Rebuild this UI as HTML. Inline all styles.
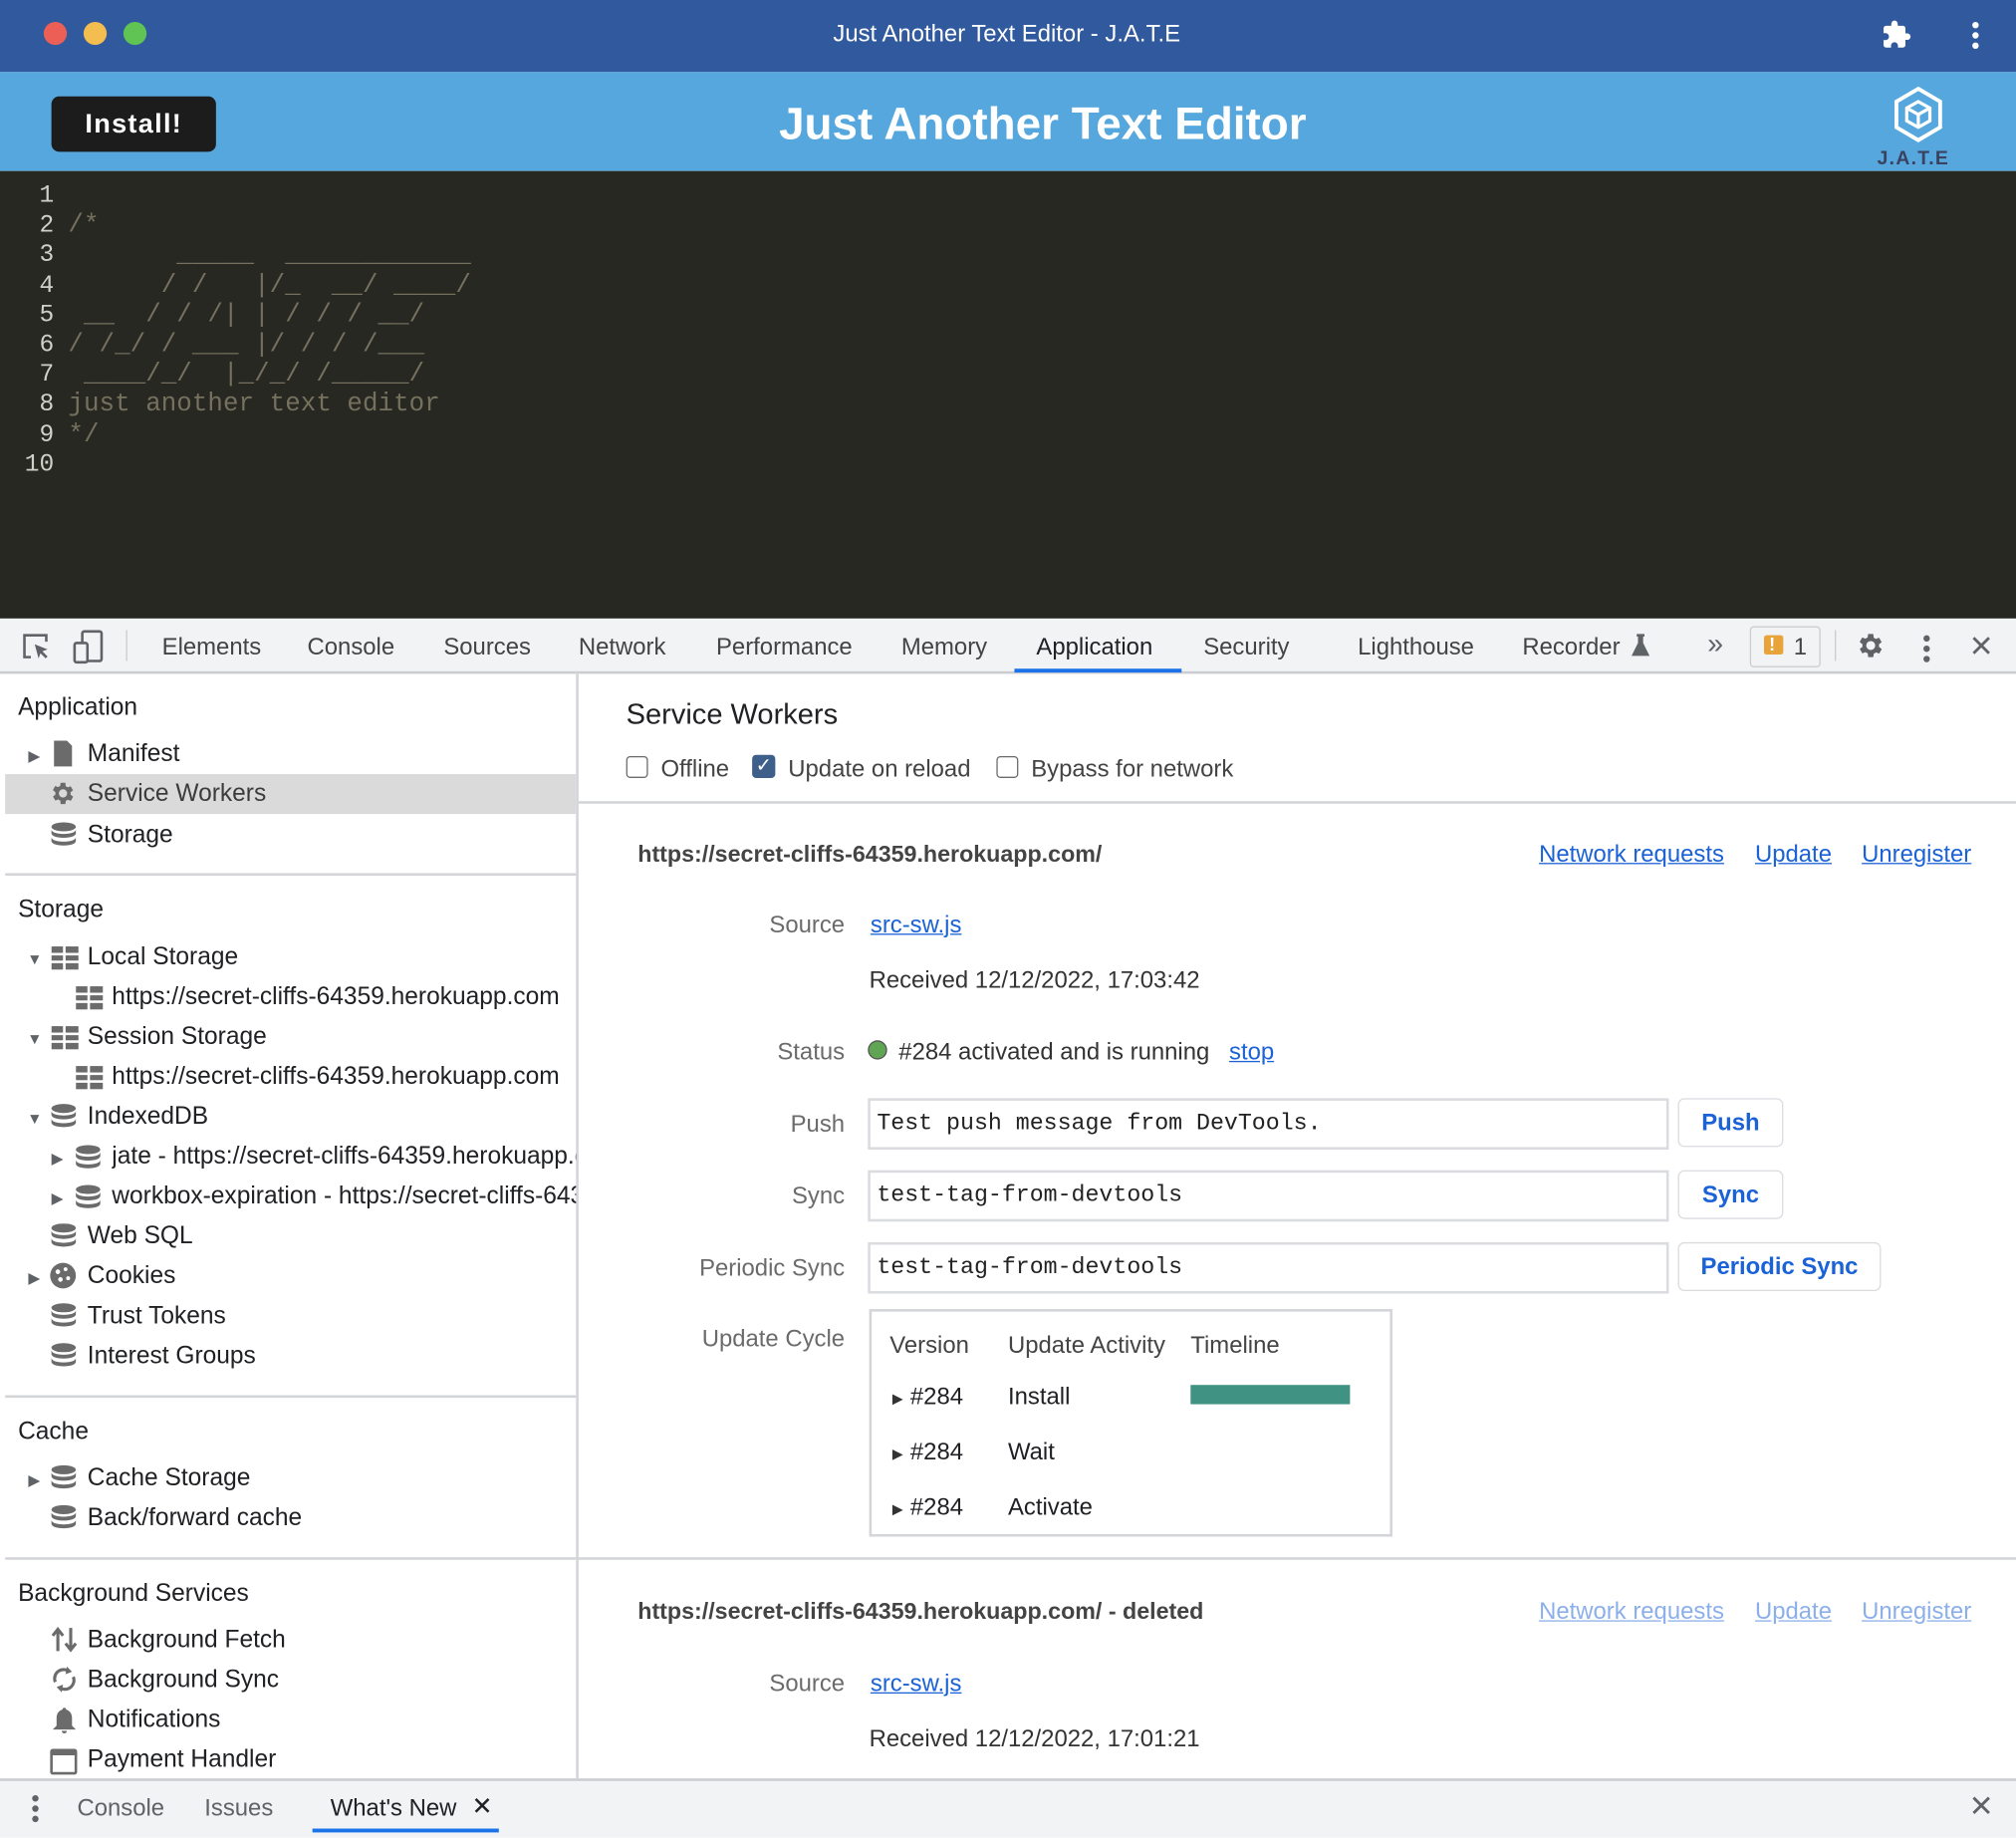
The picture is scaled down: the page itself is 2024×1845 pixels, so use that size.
<!DOCTYPE html>
<html><head><meta charset="utf-8">
<style>
html,body{margin:0;padding:0;width:2024px;height:1844px;overflow:hidden;background:#fff;}
#w{position:absolute;left:0;top:0;width:1568px;height:1429px;transform:scale(1.29082);transform-origin:0 0;font-family:"Liberation Sans",Arial,sans-serif;overflow:hidden;background:#fff}
.a{position:absolute;white-space:nowrap;line-height:22px}
.s{font-size:18.5px;color:#202124}
.sb{font-size:19px}
.lbl{font-size:18.5px;color:#6b6b6b;text-align:right;width:200px;left:457px}
.lk{color:#1a62d6;text-decoration:underline}
.mono{font-family:"Liberation Mono",monospace}
.hr{position:absolute;height:2px;background:#d3d5d8}
</style></head><body><div id="w">
<div style="position:absolute;left:0;top:0;width:1568px;height:56px;background:#31599e"></div>
<div style="position:absolute;left:34px;top:17px;width:18px;height:18px;border-radius:50%;background:#ec5f57"></div>
<div style="position:absolute;left:65px;top:17px;width:18px;height:18px;border-radius:50%;background:#f4bd4f"></div>
<div style="position:absolute;left:96px;top:17px;width:18px;height:18px;border-radius:50%;background:#5fc454"></div>
<div class="a" style="left:0;width:1566px;text-align:center;top:15px;font-size:18.5px;color:#fff">Just Another Text Editor - J.A.T.E</div>
<svg style="position:absolute;left:1463px;top:15px" width="24" height="24" viewBox="0 0 24 24"><path fill="#fff" d="M20.5 11H19V7c0-1.1-.9-2-2-2h-4V3.5a2.5 2.5 0 0 0-5 0V5H4c-1.1 0-2 .9-2 2v3.8h1.5c1.5 0 2.7 1.2 2.7 2.7S5 16.2 3.5 16.2H2V20c0 1.1.9 2 2 2h3.8v-1.5c0-1.5 1.2-2.7 2.7-2.7s2.7 1.2 2.7 2.7V22H17c1.1 0 2-.9 2-2v-4h1.5a2.5 2.5 0 0 0 0-5z"/></svg>
<div style="position:absolute;left:1534px;top:17px;width:5px;height:5px;border-radius:50%;background:#fff;box-shadow:0 8px 0 #fff,0 16px 0 #fff"></div>
<div style="position:absolute;left:0;top:56px;width:1568px;height:77px;background:#56a7dd"></div>
<div style="position:absolute;left:40px;top:75px;width:128px;height:43px;background:#1c1c1c;border-radius:6px"></div>
<div class="a" style="left:40px;width:128px;text-align:center;top:86px;font-size:21px;font-weight:bold;color:#fff;letter-spacing:1px">Install!</div>
<div class="a" style="left:0;width:1622px;text-align:center;top:76px;line-height:40px;font-size:35.5px;font-weight:bold;color:#fff">Just Another Text Editor</div>
<svg style="position:absolute;left:1470px;top:66px" width="44" height="46" viewBox="0 0 44 46"><path d="M22 3 L39 13 L39 33 L22 43 L5 33 L5 13 Z" fill="none" stroke="#fff" stroke-width="3"/><path d="M22 13 L31 18 L31 28 L22 33 L13 28 L13 18 Z M13 18 L22 23 L31 18 M22 23 L22 33" fill="none" stroke="#fff" stroke-width="2.5"/></svg>
<div class="a" style="left:1460px;top:115px;font-size:15px;line-height:18px;font-weight:bold;color:#3a4260;letter-spacing:1px">J.A.T.E</div>
<div style="position:absolute;left:0;top:133px;width:1568px;height:348px;background:#272822"></div>
<pre class="mono" style="position:absolute;left:14px;top:141px;margin:0;font-size:19px;line-height:23.2px;color:#d0d0c8;text-align:right;width:28px">1
2
3
4
5
6
7
8
9
10</pre>
<pre class="mono" style="position:absolute;left:53px;top:141px;margin:0;font-size:20px;letter-spacing:0.05px;line-height:23.2px;color:#75715e">

/*
       _____  ____________
      / /   |/_  __/ ____/
 __  / / /| | / / / __/
/ /_/ / ___ |/ / / /___
 ____/_/  |_/_/ /_____/
just another text editor
*/</pre>
<div style="position:absolute;left:0;top:481px;width:1568px;height:41px;background:#f1f3f4;border-bottom:2px solid #cbcdd1"></div>
<svg style="position:absolute;left:16px;top:491px" width="24" height="24" viewBox="0 0 24 24"><path d="M8 20H3V3h17v5" fill="none" stroke="#5f6368" stroke-width="2"/><path d="M11 10l10 4-4 1.5 4 4-1.5 1.5-4-4L14 21z" fill="#5f6368"/></svg>
<svg style="position:absolute;left:56px;top:489px" width="26" height="28" viewBox="0 0 26 28"><rect x="8" y="2" width="15" height="23" rx="1.5" fill="none" stroke="#5f6368" stroke-width="2"/><rect x="2" y="11" width="10" height="15" rx="1.5" fill="#f1f3f4" stroke="#5f6368" stroke-width="2"/></svg>
<div style="position:absolute;left:98px;top:490px;width:1px;height:24px;background:#ccc"></div>
<div class="a s" style="left:126px;top:492px;color:#444">Elements</div>
<div class="a s" style="left:239px;top:492px;color:#444">Console</div>
<div class="a s" style="left:345px;top:492px;color:#444">Sources</div>
<div class="a s" style="left:450px;top:492px;color:#444">Network</div>
<div class="a s" style="left:557px;top:492px;color:#444">Performance</div>
<div class="a s" style="left:701px;top:492px;color:#444">Memory</div>
<div class="a s" style="left:806px;top:492px;color:#202124">Application</div>
<div style="position:absolute;left:789px;top:520px;width:130px;height:3px;background:#1a73e8"></div>
<div class="a s" style="left:936px;top:492px;color:#444">Security</div>
<div class="a s" style="left:1056px;top:492px;color:#444">Lighthouse</div>
<div class="a s" style="left:1184px;top:492px;color:#444">Recorder</div>
<svg style="position:absolute;left:1268px;top:492px" width="16" height="20" viewBox="0 0 16 20"><path d="M5 1h6v2h-1v5l5 10H1L6 8V3H5z" fill="#5f6368"/></svg>
<div class="a s" style="left:1328px;top:490px;color:#5f6368;font-size:22px">»</div>
<div style="position:absolute;left:1361px;top:487px;width:53px;height:30px;border:1px solid #ccc;border-radius:3px;background:#f1f3f4"></div>
<div style="position:absolute;left:1372px;top:494px;width:15px;height:15px;background:#e8a33a;border-radius:2px"></div>
<div class="a" style="left:1376px;top:490px;color:#fff;font-weight:bold;font-size:14px">!</div>
<div class="a s" style="left:1395px;top:492px;color:#444">1</div>
<div style="position:absolute;left:1427px;top:490px;width:1px;height:24px;background:#ccc"></div>
<svg style="position:absolute;left:1443px;top:490px" width="24" height="24" viewBox="0 0 24 24"><path fill="#5f6368" d="M19.4 13a7.5 7.5 0 0 0 0-2l2.1-1.6-2-3.5-2.5 1a7 7 0 0 0-1.7-1L15 3h-4l-.4 2.7a7 7 0 0 0-1.7 1l-2.5-1-2 3.5L6.6 11a7.5 7.5 0 0 0 0 2l-2.1 1.6 2 3.5 2.5-1a7 7 0 0 0 1.7 1L11 21h4l.4-2.7a7 7 0 0 0 1.7-1l2.5 1 2-3.5zM13 15.5a3.5 3.5 0 1 1 0-7 3.5 3.5 0 0 1 0 7z" transform="translate(-1 0)"/></svg>
<div style="position:absolute;left:1496px;top:494px;width:5px;height:5px;border-radius:50%;background:#5f6368;box-shadow:0 8px 0 #5f6368,0 16px 0 #5f6368"></div>
<svg style="position:absolute;left:1533px;top:494px" width="16" height="16" viewBox="0 0 16 16"><path d="M2 2L14 14M14 2L2 14" stroke="#5f6368" stroke-width="2.2"/></svg>
<!-- sidebar -->
<div style="position:absolute;left:448px;top:523px;width:2px;height:860px;background:#d3d5d8"></div>
<div class="a s sb" style="left:14px;top:540px">Application</div>
<div class="a" style="left:22px;top:577px;font-size:12px;color:#5f6368">▶</div>
<svg style="position:absolute;left:41px;top:575px" width="16" height="22" viewBox="0 0 16 22"><path d="M1 1h10l4 4v16H1z" fill="#6b6b6b"/></svg>
<div class="a s sb" style="left:68px;top:576px">Manifest</div>
<div style="position:absolute;left:4px;top:602px;width:444px;height:31px;background:#dadada"></div>
<svg style="position:absolute;left:38px;top:606px" width="22" height="22" viewBox="0 0 24 24"><path fill="#6b6b6b" d="M19.4 13a7.5 7.5 0 0 0 0-2l2.1-1.6-2-3.5-2.5 1a7 7 0 0 0-1.7-1L15 3h-4l-.4 2.7a7 7 0 0 0-1.7 1l-2.5-1-2 3.5L6.6 11a7.5 7.5 0 0 0 0 2l-2.1 1.6 2 3.5 2.5-1a7 7 0 0 0 1.7 1L11 21h4l.4-2.7a7 7 0 0 0 1.7-1l2.5 1 2-3.5zM13 15.5a3.5 3.5 0 1 1 0-7 3.5 3.5 0 0 1 0 7z" transform="translate(-1 0)"/></svg>
<div class="a s sb" style="left:68px;top:607px;color:#3c3c3c">Service Workers</div>
<div class="a s sb" style="left:68px;top:639px">Storage</div>
<div class="hr" style="left:4px;top:679px;width:444px"></div>
<div class="a s sb" style="left:14px;top:697px">Storage</div>
<div class="a" style="left:21px;top:735px;font-size:12px;color:#5f6368">▼</div>
<div class="a s sb" style="left:68px;top:734px">Local Storage</div>
<div class="a s sb" style="left:87px;top:765px">https://secret-cliffs-64359.herokuapp.com</div>
<div class="a" style="left:21px;top:797px;font-size:12px;color:#5f6368">▼</div>
<div class="a s sb" style="left:68px;top:796px">Session Storage</div>
<div class="a s sb" style="left:87px;top:827px">https://secret-cliffs-64359.herokuapp.com</div>
<div class="a" style="left:21px;top:859px;font-size:12px;color:#5f6368">▼</div>
<div class="a s sb" style="left:68px;top:858px">IndexedDB</div>
<div class="a" style="left:40px;top:890px;font-size:12px;color:#5f6368">▶</div>
<div class="a s sb" style="left:87px;top:889px;width:361px;overflow:hidden">jate - https://secret-cliffs-64359.herokuapp.com</div>
<div class="a" style="left:40px;top:921px;font-size:12px;color:#5f6368">▶</div>
<div class="a s sb" style="left:87px;top:920px;width:361px;overflow:hidden">workbox-expiration - https://secret-cliffs-64359</div>
<div class="a s sb" style="left:68px;top:951px">Web SQL</div>
<div class="a" style="left:22px;top:983px;font-size:12px;color:#5f6368">▶</div>
<svg style="position:absolute;left:38px;top:981px" width="22" height="22" viewBox="0 0 22 22"><circle cx="11" cy="11" r="10" fill="#6b6b6b"/><circle cx="7" cy="8" r="1.8" fill="#fff"/><circle cx="13" cy="6" r="1.5" fill="#fff"/><circle cx="9" cy="14" r="1.8" fill="#fff"/><circle cx="15" cy="13" r="1.5" fill="#fff"/></svg>
<div class="a s sb" style="left:68px;top:982px">Cookies</div>
<div class="a s sb" style="left:68px;top:1013px">Trust Tokens</div>
<div class="a s sb" style="left:68px;top:1044px">Interest Groups</div>
<div class="hr" style="left:4px;top:1085px;width:444px"></div>
<div class="a s sb" style="left:14px;top:1103px">Cache</div>
<div class="a" style="left:22px;top:1140px;font-size:12px;color:#5f6368">▶</div>
<div class="a s sb" style="left:68px;top:1139px">Cache Storage</div>
<div class="a s sb" style="left:68px;top:1170px">Back/forward cache</div>
<div class="hr" style="left:4px;top:1211px;width:1564px"></div>
<div class="a s sb" style="left:14px;top:1229px">Background Services</div>
<svg style="position:absolute;left:39px;top:1264px" width="22" height="22" viewBox="0 0 22 22"><path d="M6 20V4M2 8l4-5 4 5M16 2v16M12 14l4 5 4-5" fill="none" stroke="#6b6b6b" stroke-width="2.4"/></svg>
<div class="a s sb" style="left:68px;top:1265px">Background Fetch</div>
<svg style="position:absolute;left:39px;top:1295px" width="22" height="22" viewBox="0 0 22 22"><path d="M4 13a7 7 0 0 1 11-8M18 9a7 7 0 0 1-11 8" fill="none" stroke="#6b6b6b" stroke-width="2.4"/><path d="M13 1l4 4-5 2zM9 21l-4-4 5-2z" fill="#6b6b6b"/></svg>
<div class="a s sb" style="left:68px;top:1296px">Background Sync</div>
<svg style="position:absolute;left:40px;top:1327px" width="20" height="22" viewBox="0 0 20 22"><path d="M10 1c1 0 1.5.7 1.5 1.5C14.5 3.3 16 6 16 9v6l3 3H1l3-3V9c0-3 1.5-5.7 4.5-6.5C8.5 1.7 9 1 10 1zM8 19h4a2 2 0 0 1-4 0z" fill="#6b6b6b"/></svg>
<div class="a s sb" style="left:68px;top:1327px">Notifications</div>
<div style="position:absolute;left:39px;top:1360px;width:17px;height:13px;border:2px solid #6b6b6b;border-radius:2px;border-top-width:5px"></div>
<div class="a s sb" style="left:68px;top:1358px">Payment Handler</div>
<!-- right panel -->
<div class="a" style="left:487px;top:543px;line-height:26px;font-size:22.5px;color:#202124">Service Workers</div>
<div style="position:absolute;left:487px;top:588px;width:15px;height:15px;border:1.5px solid #6b6b6b;border-radius:3px"></div>
<div class="a s" style="left:514px;top:587px;color:#444">Offline</div>
<div style="position:absolute;left:585px;top:587px;width:18px;height:18px;background:#3d5f8a;border-radius:3px;color:#fff;font-size:15px;line-height:18px;text-align:center">✓</div>
<div class="a s" style="left:613px;top:587px;color:#444">Update on reload</div>
<div style="position:absolute;left:775px;top:588px;width:15px;height:15px;border:1.5px solid #6b6b6b;border-radius:3px"></div>
<div class="a s" style="left:802px;top:587px;color:#444">Bypass for network</div>
<div class="hr" style="left:450px;top:623px;width:1118px"></div>
<div class="a" style="left:496px;top:653px;font-size:18px;font-weight:bold;color:#444">https://secret-cliffs-64359.herokuapp.com/</div>
<div class="a s lk" style="left:1197px;top:653px">Network requests</div>
<div class="a s lk" style="left:1365px;top:653px">Update</div>
<div class="a s lk" style="left:1448px;top:653px">Unregister</div>
<div class="a lbl" style="top:708px">Source</div>
<div class="a s lk" style="left:677px;top:708px">src-sw.js</div>
<div class="a s" style="left:676px;top:751px;color:#333">Received 12/12/2022, 17:03:42</div>
<div class="a lbl" style="top:807px">Status</div>
<div style="position:absolute;left:675px;top:809px;width:13px;height:13px;border-radius:50%;background:#5fa553;border:1px solid #555"></div>
<div class="a s" style="left:699px;top:807px;color:#333">#284 activated and is running</div>
<div class="a s lk" style="left:956px;top:807px">stop</div>
<div class="a lbl" style="top:863px">Push</div>
<div style="position:absolute;left:675px;top:854px;width:619px;height:36px;border:2px solid #dadce0"></div>
<div class="a mono" style="left:682px;top:863px;font-size:18px;color:#222">Test push message from DevTools.</div>
<div style="position:absolute;left:1305px;top:854px;width:80px;height:36px;border:1.5px solid #dadce0;border-radius:5px"></div>
<div class="a" style="left:1305px;width:82px;text-align:center;top:862px;font-size:18.5px;font-weight:bold;color:#1a62d6">Push</div>
<div class="a lbl" style="top:919px">Sync</div>
<div style="position:absolute;left:675px;top:910px;width:619px;height:36px;border:2px solid #dadce0"></div>
<div class="a mono" style="left:682px;top:919px;font-size:18px;color:#222">test-tag-from-devtools</div>
<div style="position:absolute;left:1305px;top:910px;width:80px;height:36px;border:1.5px solid #dadce0;border-radius:5px"></div>
<div class="a" style="left:1305px;width:82px;text-align:center;top:918px;font-size:18.5px;font-weight:bold;color:#1a62d6">Sync</div>
<div class="a lbl" style="top:975px">Periodic Sync</div>
<div style="position:absolute;left:675px;top:966px;width:619px;height:36px;border:2px solid #dadce0"></div>
<div class="a mono" style="left:682px;top:975px;font-size:18px;color:#222">test-tag-from-devtools</div>
<div style="position:absolute;left:1305px;top:966px;width:156px;height:36px;border:1.5px solid #dadce0;border-radius:5px"></div>
<div class="a" style="left:1305px;width:158px;text-align:center;top:974px;font-size:18.5px;font-weight:bold;color:#1a62d6">Periodic Sync</div>
<div class="a lbl" style="top:1030px">Update Cycle</div>
<div style="position:absolute;left:676px;top:1018px;width:403px;height:173px;border:2px solid #d3d5d8"></div>
<div class="a s" style="left:692px;top:1035px;color:#444">Version</div>
<div class="a s" style="left:784px;top:1035px;color:#444">Update Activity</div>
<div class="a s" style="left:926px;top:1035px;color:#444">Timeline</div>
<div class="a" style="left:694px;top:1077px;font-size:11px;color:#333">▶</div>
<div class="a s" style="left:708px;top:1075px">#284</div>
<div class="a s" style="left:784px;top:1075px">Install</div>
<div style="position:absolute;left:926px;top:1077px;width:124px;height:15px;background:#409283"></div>
<div class="a" style="left:694px;top:1120px;font-size:11px;color:#333">▶</div>
<div class="a s" style="left:708px;top:1118px">#284</div>
<div class="a s" style="left:784px;top:1118px">Wait</div>
<div class="a" style="left:694px;top:1163px;font-size:11px;color:#333">▶</div>
<div class="a s" style="left:708px;top:1161px">#284</div>
<div class="a s" style="left:784px;top:1161px">Activate</div>
<div class="a" style="left:496px;top:1242px;font-size:18px;font-weight:bold;color:#444">https://secret-cliffs-64359.herokuapp.com/ - deleted</div>
<div class="a s lk" style="left:1197px;top:1242px;opacity:.5">Network requests</div>
<div class="a s lk" style="left:1365px;top:1242px;opacity:.5">Update</div>
<div class="a s lk" style="left:1448px;top:1242px;opacity:.5">Unregister</div>
<div class="a lbl" style="top:1298px">Source</div>
<div class="a s lk" style="left:677px;top:1298px">src-sw.js</div>
<div class="a s" style="left:676px;top:1341px;color:#333">Received 12/12/2022, 17:01:21</div>
<div style="position:absolute;left:0;top:1383px;width:1568px;height:46px;background:#f1f3f4;border-top:2px solid #cbcdd1"></div>
<div style="position:absolute;left:25px;top:1396px;width:5px;height:5px;border-radius:50%;background:#5f6368;box-shadow:0 8px 0 #5f6368,0 16px 0 #5f6368"></div>
<div class="a s" style="left:60px;top:1395px;color:#5f6368">Console</div>
<div class="a s" style="left:159px;top:1395px;color:#5f6368">Issues</div>
<div class="a s" style="left:257px;top:1395px">What's New</div>
<svg style="position:absolute;left:369px;top:1398px" width="12" height="12" viewBox="0 0 12 12"><path d="M1 1L11 11M11 1L1 11" stroke="#202124" stroke-width="2"/></svg>
<div style="position:absolute;left:243px;top:1422px;width:145px;height:3px;background:#1a73e8"></div>
<svg style="position:absolute;left:1533px;top:1396px" width="16" height="16" viewBox="0 0 16 16"><path d="M2 2L14 14M14 2L2 14" stroke="#5f6368" stroke-width="2.2"/></svg>
</div>
<script>
(function(){var w=document.getElementById('w');
function db(x,y){w.insertAdjacentHTML('beforeend','<svg style="position:absolute;left:'+x+'px;top:'+y+'px" width="21" height="22" viewBox="0 0 21 22"><ellipse cx="10.5" cy="4" rx="9.5" ry="3.5" fill="#6b6b6b"/><path d="M1 6v3c0 2 4 3.5 9.5 3.5S20 11 20 9V6c0 2-4 3.5-9.5 3.5S1 8 1 6zm0 6v3c0 2 4 3.5 9.5 3.5S20 17 20 15v-3c0 2-4 3.5-9.5 3.5S1 14 1 12z" fill="#6b6b6b"/></svg>');}
function gr(x,y){w.insertAdjacentHTML('beforeend','<svg style="position:absolute;left:'+x+'px;top:'+y+'px" width="22" height="20" viewBox="0 0 22 20"><rect x="0" y="1" width="9" height="5" fill="#6b6b6b"/><rect x="11" y="1" width="10" height="5" fill="#6b6b6b"/><rect x="0" y="8" width="9" height="4" fill="#6b6b6b"/><rect x="11" y="8" width="10" height="4" fill="#6b6b6b"/><rect x="0" y="14" width="9" height="5" fill="#6b6b6b"/><rect x="11" y="14" width="10" height="5" fill="#6b6b6b"/></svg>');}
db(39,639);gr(40,735);gr(59,766);gr(40,797);gr(59,828);db(39,858);db(58,890);db(58,921);db(39,951);db(39,1013);db(39,1044);db(39,1139);db(39,1170);
})();
</script>
</body></html>
